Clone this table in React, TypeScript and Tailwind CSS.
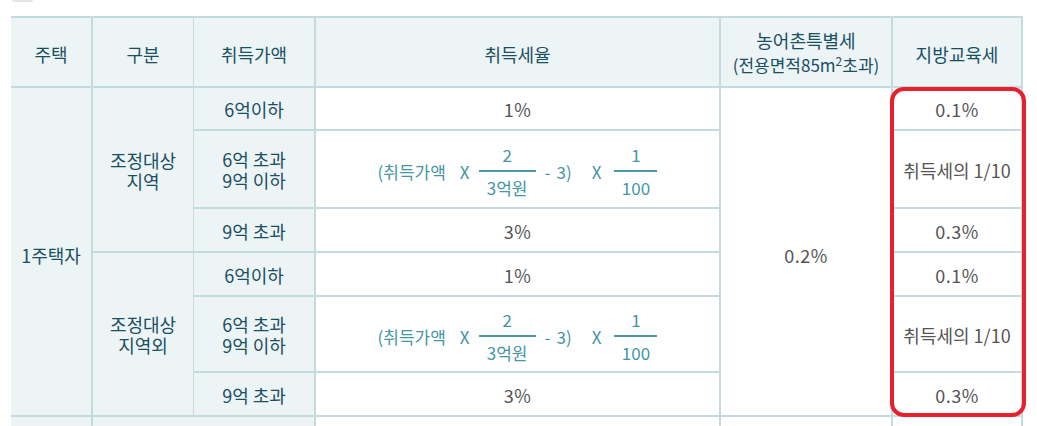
import React from "react";

const font = { fontFamily: '"Noto Sans CJK KR", "Noto Sans", sans-serif' };

const head =
  "flex flex-col items-center justify-center border-b-2 border-r-2 border-[#c4dbde] bg-[#ecf4f6] pt-[4px] text-[18px] leading-[24px] text-[#1a4f62]";
const side =
  "flex flex-col items-center justify-center border-b-2 border-r-2 border-[#c4dbde] bg-[#ecf4f6] pt-[2px] text-center text-[18px] leading-[21px] text-[#1a4f62]";
const cell =
  "flex items-center justify-center border-b-2 border-r-2 border-[#c4dbde] bg-white pt-[2px] text-[18px] tracking-[0.5px] text-[#555555]";

function Frac({ top, bottom, width }: { top: string; bottom: string; width: string }) {
  return (
    <span className="flex flex-col items-center">
      <span className="leading-[20px]">{top}</span>
      <span className={`mt-[5px] h-[2px] bg-[#4a9aa6] ${width}`} />
      <span className="mt-[6px] leading-[20px]">{bottom}</span>
    </span>
  );
}

function Formula() {
  return (
    <div className="flex items-center pt-[3px] text-[17px] tracking-normal text-[#4596a3]">
      <span>(취득가액</span>
      <span className="ml-[14px]">X</span>
      <span className="ml-[9px]">
        <Frac top="2" bottom="3억원" width="w-[57px]" />
      </span>
      <span className="ml-[9px]">-</span>
      <span className="ml-[6px]">3)</span>
      <span className="ml-[20px]">X</span>
      <span className="ml-[13px]">
        <Frac top="1" bottom="100" width="w-[43px]" />
      </span>
    </div>
  );
}

export default function App() {
  return (
    <div className="min-h-[426px] bg-white px-[11px]" style={font}>
      <div className="ml-[1px] h-[2px] w-[21px] rounded-b-full bg-[#e4e4e4]" />
      <div className="relative mt-[14px] w-[1012px]">
        <div className="grid grid-cols-[82px_101px_122px_405px_172px_130px] grid-rows-[70px_43px_78px_44px_44px_76px_44px_44px] border-t-2 border-[#c4dbde]">
          {/* header */}
          <div className={head}>주택</div>
          <div className={`${head} !border-r`}>구분</div>
          <div className={head}>취득가액</div>
          <div className={head}>취득세율</div>
          <div className={`${head} !pt-0 text-center`}>
            <p>
              농어촌특별세
              <br />
              <span className="text-[17px]">
                (전용면적85m<sup className="text-[12px]">2</sup>초과)
              </span>
            </p>
          </div>
          <div className={`${head} border-r-0`}>지방교육세</div>

          {/* body */}
          <div className={`${side} row-span-6 !pt-2`}>1주택자</div>
          <div className={`${side} row-span-3 !border-r`}>
            <p>
              조정대상
              <br />
              지역
            </p>
          </div>
          <div className={side}>6억이하</div>
          <div className={cell}>1%</div>
          <div className={`${cell} row-span-6 !pt-2`}>0.2%</div>
          <div className={`${cell} border-r-0`}>0.1%</div>

          <div className={side}>
            <p>
              6억 초과
              <br />
              9억 이하
            </p>
          </div>
          <div className={cell}>
            <Formula />
          </div>
          <div className={`${cell} border-r-0 tracking-normal`}>취득세의 1/10</div>

          <div className={side}>9억 초과</div>
          <div className={cell}>3%</div>
          <div className={`${cell} border-r-0`}>0.3%</div>

          <div className={`${side} row-span-3 !border-r`}>
            <p>
              조정대상
              <br />
              지역외
            </p>
          </div>
          <div className={side}>6억이하</div>
          <div className={cell}>1%</div>
          <div className={`${cell} border-r-0`}>0.1%</div>

          <div className={side}>
            <p>
              6억 초과
              <br />
              9억 이하
            </p>
          </div>
          <div className={cell}>
            <Formula />
          </div>
          <div className={`${cell} border-r-0 tracking-normal`}>취득세의 1/10</div>

          <div className={side}>9억 초과</div>
          <div className={cell}>3%</div>
          <div className={`${cell} border-r-0`}>0.3%</div>

          {/* next row, cut off */}
          <div className={side} />
          <div className={`${side} col-span-2`} />
          <div className={cell} />
          <div className={cell} />
          <div className={`${cell} border-r-0`} />
        </div>

        {/* highlight marker */}
        <div className="pointer-events-none absolute left-[879px] top-[71px] h-[330px] w-[136px] rounded-[14px] border-4 border-[#e8202b]" />
      </div>
    </div>
  );
}
